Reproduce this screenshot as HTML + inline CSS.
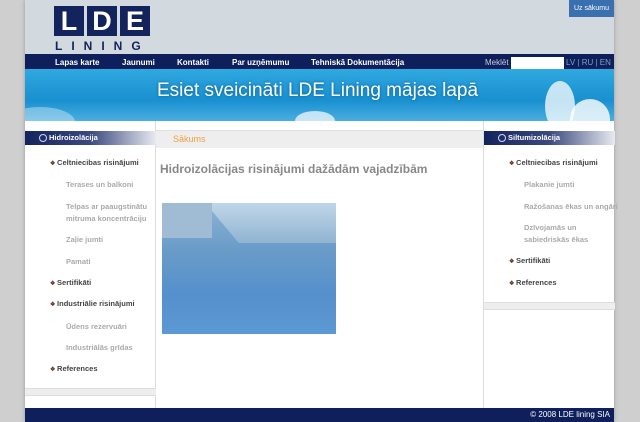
<!DOCTYPE html>
<html><head><meta charset="utf-8"><style>
*{margin:0;padding:0;box-sizing:border-box}
body{width:640px;height:422px;overflow:hidden;background:#cfcfcf;font-family:"Liberation Sans",sans-serif;position:relative}
.page{position:absolute;left:25px;top:0;width:589px;height:422px;background:#fff;box-shadow:0 0 4px #999}
.hdr{position:absolute;left:0;top:0;width:589px;height:54px;background:#d2dae0}
.logo{position:absolute;left:29px;top:6px}
.logo .b{position:absolute;top:0;width:30px;height:30px;background:#13235c;color:#fff;font-weight:bold;font-size:27px;text-align:center;line-height:30px}
.logo .l{position:absolute;left:1px;top:33px;font-size:12px;font-weight:bold;color:#13235c;letter-spacing:9px;white-space:nowrap}
.uz{position:absolute;right:0;top:0;width:45px;height:17px;background:#3a70b0;color:#fff;font-size:7px;text-align:center;line-height:17px}
.nav{position:absolute;left:0;top:54px;width:589px;height:15px;background:#0e1f5c;color:#fff;font-size:8px;font-weight:bold}
.nav span{position:absolute;top:4px}
.ban{position:absolute;left:0;top:69px;width:589px;height:52px;background:linear-gradient(180deg,#30a8e0,#1990d0 60%,#4aaee0);overflow:hidden}
.ban .t{position:absolute;left:132px;top:11px;color:#fff;font-size:19px;white-space:nowrap;text-shadow:0 0 3px #0a5a90}
.cl{position:absolute;border-radius:50%;background:#fff}
.col{position:absolute;top:121px;height:287px}
.lh{position:absolute;height:14px;background:linear-gradient(90deg,#13235c,#3c4a80 50%,#e8eaf0);color:#fff;font-size:7.5px;font-weight:bold;line-height:14px;padding-left:24px}
.lh:before{content:"";position:absolute;left:14px;top:3px;width:6px;height:6px;border:1px solid #cfd4ff;border-radius:50%}
.it{position:absolute;font-size:7.5px;white-space:nowrap}
.m{color:#444;font-weight:bold}
.m:before{content:"❖ ";color:#6a3a2a;font-size:6px}
.s{color:#aaa;font-weight:bold;line-height:12px}
.foot{position:absolute;left:0;top:408px;width:589px;height:14px;background:#0e1f5c;color:#fff;font-size:8px;text-align:right;padding-right:4px;line-height:14px}
</style></head><body>
<div class="page">
<div class="hdr">
 <div class="logo"><div class="b" style="left:0">L</div><div class="b" style="left:33px">D</div><div class="b" style="left:66px">E</div><div class="l">LINING</div></div>
 <div class="uz">Uz sākumu</div>
</div>
<div class="nav">
 <span style="left:30px">Lapas karte</span><span style="left:97px">Jaunumi</span><span style="left:152px">Kontakti</span><span style="left:207px">Par uzņēmumu</span><span style="left:286px">Tehniskā Dokumentācija</span>
 <span style="left:460px;font-weight:normal;color:#ccd">Meklēt</span>
 <div style="position:absolute;left:486px;top:3px;width:53px;height:12px;background:#fff"></div>
 <span style="left:541px;color:#7fa0c0;font-weight:normal">LV | RU | EN</span>
</div>
<div class="ban">
 <div class="cl" style="left:520px;top:12px;width:30px;height:50px;opacity:.75"></div>
 <div class="cl" style="left:545px;top:30px;width:40px;height:40px;opacity:.8"></div>
 <div class="cl" style="left:270px;top:42px;width:40px;height:20px;opacity:.7"></div>
 <div class="cl" style="left:-20px;top:38px;width:70px;height:30px;opacity:.35"></div>
 <div class="t">Esiet sveicināti LDE Lining mājas lapā</div>
</div>
<div class="col" style="left:0;width:131px;border-right:1px solid #ddd">
 <div class="lh" style="left:0;top:10px;width:131px">Hidroizolācija</div>
 <div class="it m" style="left:25px;top:37px">Celtniecibas risinājumi</div>
 <div class="it s" style="left:41px;top:58px">Terases un balkoni</div>
 <div class="it s" style="left:41px;top:80px">Telpas ar paaugstinātu<br>mitruma koncentrāciju</div>
 <div class="it s" style="left:41px;top:113px">Zaļie jumti</div>
 <div class="it s" style="left:41px;top:135px">Pamati</div>
 <div class="it m" style="left:25px;top:157px">Sertifikāti</div>
 <div class="it m" style="left:25px;top:178px">Industriālie risinājumi</div>
 <div class="it s" style="left:41px;top:200px">Ūdens rezervuāri</div>
 <div class="it s" style="left:41px;top:221px">Industriālās grīdas</div>
 <div class="it m" style="left:25px;top:243px">References</div>
 <div style="position:absolute;left:0;top:267px;width:131px;height:8px;background:#eee;border-top:1px solid #ddd;border-bottom:1px solid #ddd"></div>
</div>
<div class="col" style="left:131px;width:327px">
 <div style="position:absolute;left:0;top:9px;width:327px;height:18px;background:#eee;border-top:1px solid #e0e0e0;color:#f0a040;font-size:9px;line-height:17px;padding-left:17px">Sākums</div>
 <div style="position:absolute;left:4px;top:41px;font-size:12px;font-weight:bold;color:#888;white-space:nowrap">Hidroizolācijas risinājumi dažādām vajadzībām</div>
 <div style="position:absolute;left:6px;top:82px;width:174px;height:131px;background:linear-gradient(180deg,#8fb4d4 0%,#6a9cc8 35%,#5590cc 70%,#5c98d4);overflow:hidden">
  <div style="position:absolute;left:60px;top:0;width:140px;height:40px;background:linear-gradient(180deg,#c0d6e8,#90b4d2);transform:skewX(40deg)"></div>
  <div style="position:absolute;left:0;top:0;width:50px;height:35px;background:#a0bcd4"></div>
 </div>
</div>
<div class="col" style="left:458px;width:131px;border-left:1px solid #ddd">
 <div class="lh" style="left:0;top:10px;width:131px">Siltumizolācija</div>
 <div class="it m" style="left:25px;top:37px">Celtniecibas risinājumi</div>
 <div class="it s" style="left:40px;top:58px">Plakanie jumti</div>
 <div class="it s" style="left:40px;top:80px">Ražošanas ēkas un angāri</div>
 <div class="it s" style="left:40px;top:101px">Dzīvojamās un<br>sabiedriskās ēkas</div>
 <div class="it m" style="left:25px;top:135px">Sertifikāti</div>
 <div class="it m" style="left:25px;top:157px">References</div>
 <div style="position:absolute;left:0;top:181px;width:131px;height:8px;background:#eee;border-top:1px solid #ddd;border-bottom:1px solid #ddd"></div>
</div>
<div class="foot">© 2008 LDE lining SIA</div>
</div>
</body></html>
